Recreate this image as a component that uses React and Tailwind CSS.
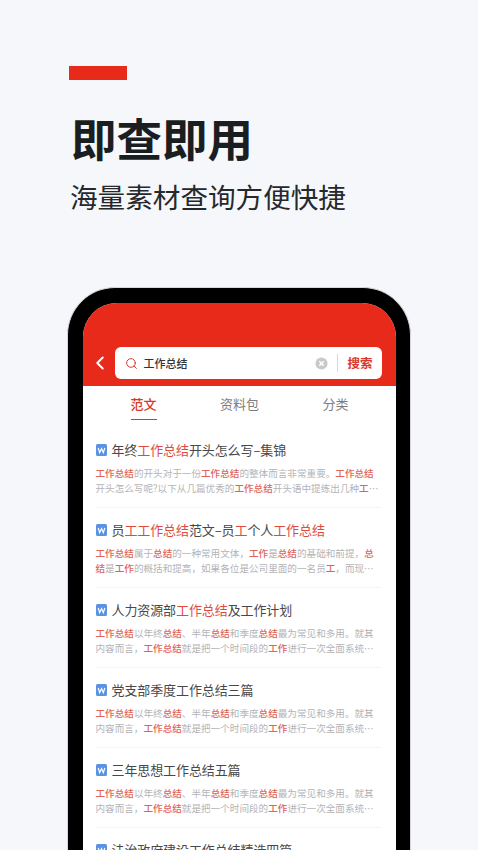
import { Search, ChevronLeft } from 'lucide-react';

const cjk = { fontFamily: '"Noto Sans CJK SC", "Noto Sans", sans-serif' };

// text in [brackets] is the highlighted search term
const reports = [
  {
    title: '年终[工作总结]开头怎么写–集锦',
    lines: [
      '[工作总结]的开头对于一份[工作总结]的整体而言非常重要。[工作总结]',
      '开头怎么写呢?以下从几篇优秀的[工作总结]开头语中提练出几种[工]…',
    ],
  },
  {
    title: '员[工工作总结]范文–员[工]个人[工作总结]',
    lines: [
      '[工作总结]属于[总结]的一种常用文体，[工作]是[总结]的基础和前提，[总]',
      '[结]是[工作]的概括和提高，如果各位是公司里面的一名员[工]，而现…',
    ],
  },
  {
    title: '人力资源部[工作总结]及工作计划',
    lines: [
      '[工作总结]以年终[总结]、半年[总结]和季度[总结]最为常见和多用。就其',
      '内容而言，[工作总结]就是把一个时间段的[工作]进行一次全面系统…',
    ],
  },
  {
    title: '党支部季度工作总结三篇',
    lines: [
      '[工作总结]以年终[总结]、半年[总结]和季度[总结]最为常见和多用。就其',
      '内容而言，[工作总结]就是把一个时间段的[工作]进行一次全面系统…',
    ],
  },
  {
    title: '三年思想工作总结五篇',
    lines: [
      '[工作总结]以年终[总结]、半年[总结]和季度[总结]最为常见和多用。就其',
      '内容而言，[工作总结]就是把一个时间段的[工作]进行一次全面系统…',
    ],
  },
  {
    title: '法治政府建设工作总结精选四篇',
    lines: [],
  },
];

function Marked({ text, markClass }) {
  return text.split(/(\[[^\]]+\])/).map((part, idx) =>
    part.startsWith('[') ? (
      <span key={idx} className={markClass}>
        {part.slice(1, -1)}
      </span>
    ) : (
      <span key={idx}>{part}</span>
    )
  );
}

function WordIcon() {
  return (
    <svg width="11" height="12" viewBox="0 0 11 12" className="shrink-0">
      <rect width="11" height="12" rx="1.5" fill="#5b93e2" />
      <path d="M2.2 4 L3.7 8.6 L5.5 4.6 L7.3 8.6 L8.8 4" fill="none" stroke="#fff" strokeWidth="1.2" />
    </svg>
  );
}

function ReportRow({ report }) {
  return (
    <div className="h-[80px] pt-[12px] border-b border-[#f4f4f6]">
      <div className="flex items-center gap-[5px] h-[20px]">
        <WordIcon />
        <div className="text-[13px] tracking-[-0.1px] leading-[20px] text-[#48484a] whitespace-nowrap">
          <Marked text={report.title} markClass="text-[#dd4a3f]" />
        </div>
      </div>
      <div className="mt-[6px] text-[9.6px] leading-[15px] text-[#b4b4b7] whitespace-nowrap">
        {report.lines.map((line, idx) => (
          <div key={idx}>
            <Marked text={line} markClass="text-[#e0635a] font-medium" />
          </div>
        ))}
      </div>
    </div>
  );
}

export default function App() {
  return (
    <div className="h-[850px] overflow-hidden bg-[#f5f7fb]" style={cjk}>
      <div className="ml-[69px] pt-[66px]">
        <div className="w-[58px] h-[14px] bg-[#e72a19]" />
      </div>
      <h1 className="ml-[71px] mt-[28px] h-[58px] text-[45.5px] leading-[58px] font-bold text-[#1b1e21] whitespace-nowrap">
        即查即用
      </h1>
      <p className="ml-[70px] mt-[10px] h-[40px] text-[27.6px] leading-[40px] text-[#26292c] whitespace-nowrap">
        海量素材查询方便快捷
      </p>

      <div className="ml-[67px] mt-[71px] w-[344px] h-[700px] rounded-t-[48px] bg-black border-[1.5px] border-b-0 border-[#d5d6da] pt-[15px] px-[14.5px]">
        <div className="h-[600px] rounded-t-[34px] overflow-hidden bg-white">
          <div className="h-[82.5px] bg-[#e72a19] pt-[44px] pr-[13.5px] flex items-start">
            <div className="w-[32px] h-[32px] pl-[2px] flex items-center justify-center shrink-0">
              <ChevronLeft size={22} strokeWidth={2.2} className="text-white" />
            </div>
            <div className="flex-1 h-[32px] rounded-[6px] bg-white flex items-center pl-[10px]">
              <Search size={13} strokeWidth={1.8} className="text-[#d9372c] shrink-0" />
              <span className="ml-[6px] text-[11px] font-medium text-[#333336] flex-1">工作总结</span>
              <svg width="13" height="13" viewBox="0 0 14 14" className="shrink-0">
                <circle cx="7" cy="7" r="6.5" fill="#c9c9cc" />
                <path d="M4.6 4.6 L9.4 9.4 M9.4 4.6 L4.6 9.4" stroke="#fff" strokeWidth="1.6" />
              </svg>
              <div className="ml-[9px] w-px h-[18px] bg-[#f3d0cc]" />
              <span className="w-[44px] text-center text-[12.5px] font-semibold text-[#d9372c] whitespace-nowrap">搜索</span>
            </div>
          </div>

          <div className="h-[39px] grid grid-cols-3 pl-[13px] pr-[12px] text-[13px]">
            <div className="flex justify-center">
              <div className="h-[34px] w-[26px] border-b-[1.5px] border-[#d9372c] leading-[36px] text-center font-medium text-[#d9372c] whitespace-nowrap">
                范文
              </div>
            </div>
            <div className="text-center leading-[36px] text-[#7d7d80]">资料包</div>
            <div className="text-center leading-[36px] text-[#7d7d80]">分类</div>
          </div>

          <div className="pl-[13px] pr-[15px] pt-[3px]">
            {reports.map((report, idx) => (
              <ReportRow key={idx} report={report} />
            ))}
          </div>
        </div>
      </div>
    </div>
  );
}
